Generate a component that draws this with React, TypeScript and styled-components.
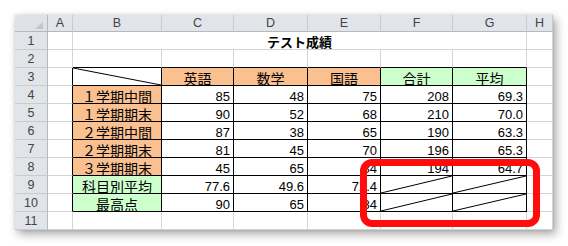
import styled, { createGlobalStyle } from "styled-components";

const GlobalStyle = createGlobalStyle`
  html, body {
    margin: 0;
    padding: 0;
    background: #fff;
  }
  body {
    font-family: "Liberation Sans", "Noto Sans CJK JP", sans-serif;
  }
`;

const GRID = "#d4d4d4";
const INK = "#000";
const ORANGE = "#fac090";
const GREEN = "#ccffcc";
const COLS = [33, 25, 89, 72, 74, 73, 72, 74, 26];
const LETTERS = ["A", "B", "C", "D", "E", "F", "G", "H"];

const Page = styled.div`
  position: relative;
  width: 568px;
  height: 246px;
  padding: 15px 0 0 15px;
  box-sizing: border-box;
  overflow: hidden;
`;

const Sheet = styled.div`
  display: grid;
  grid-template-columns: ${COLS.map((w) => w + "px").join(" ")};
  grid-template-rows: 17px repeat(11, 18px);
  width: 538px;
  background: #fff;
  box-shadow: 3px 4px 9px rgba(0, 0, 0, 0.35), 0 0 3px rgba(0, 0, 0, 0.12);
`;

const Corner = styled.div`
  position: relative;
  background: #dfe3e8;
  border-right: 1px solid #b4b9c0;
  border-bottom: 1px solid #b4b9c0;

  &::after {
    content: "";
    position: absolute;
    right: 4px;
    bottom: 2px;
    border-left: 8px solid transparent;
    border-bottom: 7px solid #c2c6cc;
  }
`;

const ColHead = styled.div`
  display: flex;
  align-items: center;
  justify-content: center;
  background: #e1e5ea;
  border-right: 1px solid #c8ccd2;
  border-bottom: 1px solid #b4b9c0;
  font-family: "Liberation Sans", sans-serif;
  font-size: 12.5px;
  color: #444;
`;

const RowHead = styled(ColHead)`
  border-right: 1px solid #b4b9c0;
  border-bottom: 1px solid #c8ccd2;
`;

const Cell = styled.div<{
  $bg?: string;
  $align?: string;
  $right: string;
  $bottom: string;
  $bold?: boolean;
  $span?: number;
  $jp?: boolean;
}>`
  position: relative;
  grid-column: span ${(p) => p.$span ?? 1};
  background: ${(p) => p.$bg ?? "#fff"};
  border-right: 1px solid ${(p) => p.$right};
  border-bottom: 1px solid ${(p) => p.$bottom};
  padding: 4px 3px 0;
  line-height: 14px;
  font-size: ${(p) => (p.$jp ? "14px" : "13px")};
  font-weight: ${(p) => (p.$bold ? 700 : 400)};
  text-align: ${(p) => p.$align ?? "left"};
  white-space: nowrap;
  color: #000;
  min-width: 0;
`;

const Slash = styled.svg`
  position: absolute;
  inset: 0;
  width: 100%;
  height: 100%;
  pointer-events: none;
`;

const Highlight = styled.div`
  position: absolute;
  left: 360px;
  top: 159px;
  width: 180px;
  height: 68px;
  box-sizing: border-box;
  border: 7px solid #ff0d0d;
  border-radius: 12px;
`;

type Spec = {
  t?: string;
  bg?: string;
  a?: "left" | "center" | "right";
  d?: "down" | "up";
  span?: number;
  b?: boolean;
  jp?: boolean;
};

const n = (t: string): Spec => ({ t, a: "right" });
const label = (t: string, bg: string): Spec => ({ t, bg, a: "center", jp: true });
const up: Spec = { d: "up" };
const empty = (): Spec[] => Array.from({ length: 8 }, () => ({}));

const rows: Spec[][] = [
  [{}, { t: "テスト成績", a: "center", b: true, span: 6 }, {}],
  empty(),
  [{}, { d: "down" }, label("英語", ORANGE), label("数学", ORANGE), label("国語", ORANGE), label("合計", GREEN), label("平均", GREEN), {}],
  [{}, label("１学期中間", ORANGE), n("85"), n("48"), n("75"), n("208"), n("69.3"), {}],
  [{}, label("１学期期末", ORANGE), n("90"), n("52"), n("68"), n("210"), n("70.0"), {}],
  [{}, label("２学期中間", ORANGE), n("87"), n("38"), n("65"), n("190"), n("63.3"), {}],
  [{}, label("２学期期末", ORANGE), n("81"), n("45"), n("70"), n("196"), n("65.3"), {}],
  [{}, label("３学期期末", ORANGE), n("45"), n("65"), n("84"), n("194"), n("64.7"), {}],
  [{}, label("科目別平均", GREEN), n("77.6"), n("49.6"), n("72.4"), up, up, {}],
  [{}, label("最高点", GREEN), n("90"), n("65"), n("84"), up, up, {}],
  empty(),
];

function renderRow(cells: Spec[], r: number) {
  let col = 0;
  return cells.map((c, i) => {
    const start = col;
    const end = col + (c.span ?? 1) - 1;
    col = end + 1;
    const inTable = r >= 3 && r <= 10;
    const right = inTable && end <= 6 ? INK : GRID;
    const bottom = r >= 2 && r <= 10 && start >= 1 && end <= 6 ? INK : GRID;
    return (
      <Cell
        key={`${r}-${i}`}
        $span={c.span}
        $bg={c.bg}
        $align={c.a}
        $bold={c.b}
        $jp={c.jp}
        $right={right}
        $bottom={bottom}
      >
        {c.t}
        {c.d && (
          <Slash viewBox="0 0 100 100" preserveAspectRatio="none">
            <line
              x1="0"
              y1={c.d === "down" ? 0 : 100}
              x2="100"
              y2={c.d === "down" ? 100 : 0}
              stroke="#000"
              strokeWidth="1"
              vectorEffect="non-scaling-stroke"
            />
          </Slash>
        )}
      </Cell>
    );
  });
}

export default function App() {
  return (
    <Page>
      <GlobalStyle />
      <Sheet>
        <Corner />
        {LETTERS.map((l) => (
          <ColHead key={l}>{l}</ColHead>
        ))}
        {rows.map((cells, i) => [
          <RowHead key={`h${i}`}>{i + 1}</RowHead>,
          ...renderRow(cells, i + 1),
        ])}
      </Sheet>
      <Highlight />
    </Page>
  );
}
